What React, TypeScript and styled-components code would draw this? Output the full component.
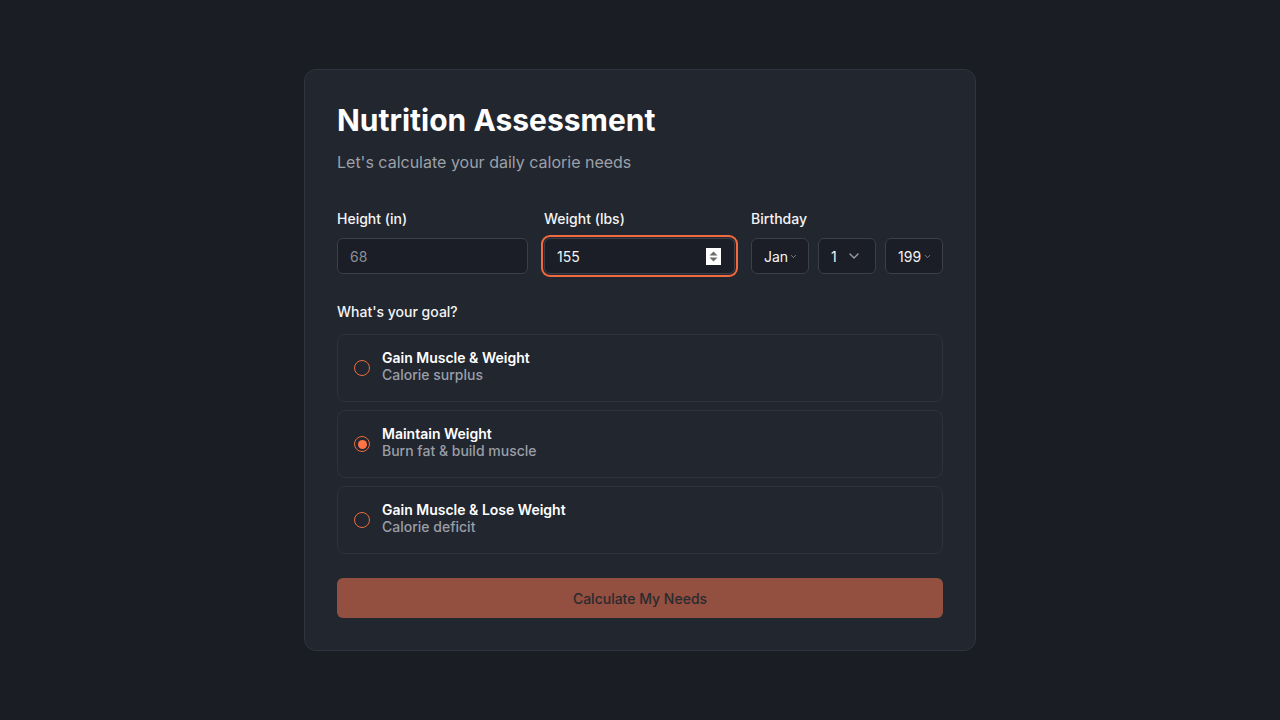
import React from "react";
import styled, { createGlobalStyle, css } from "styled-components";

const Global = createGlobalStyle`
  html, body { margin: 0; padding: 0; background: #1b1d24; }
  body { font-family: Inter, "Noto Sans", sans-serif; color: #f4f4f5; }
  * { box-sizing: border-box; }
`;

const Page = styled.div`
  min-height: 720px;
  display: flex;
  justify-content: center;
  align-items: flex-start;
  padding-top: 69px;
`;

const Card = styled.div`
  width: 672px;
  background: #22262f;
  border: 1px solid #30343e;
  border-radius: 12px;
  padding: 32px 32px 32px;
`;

const Title = styled.h1`
  margin: 0;
  font-size: 30px;
  line-height: 36px;
  font-weight: 700;
  color: #ffffff;
`;

const Subtitle = styled.p`
  margin: 12px 0 0;
  font-size: 16px;
  line-height: 24px;
  color: #9ca0a8;
`;

const FieldsRow = styled.div`
  margin-top: 35px;
  display: grid;
  grid-template-columns: repeat(3, 1fr);
  gap: 16px;
`;

const Field = styled.div`
  display: flex;
  flex-direction: column;
  gap: 9px;
`;

const Label = styled.div`
  font-size: 14px;
  line-height: 20px;
  font-weight: 500;
  color: #f4f4f5;
`;

const InputBox = styled.div<{ $focused?: boolean }>`
  height: 36px;
  border: 1px solid #3a3f4a;
  background: #1b1e26;
  border-radius: 6px;
  display: flex;
  align-items: center;
  padding: 0 12px;
  font-size: 14px;
  ${(p) =>
    p.$focused &&
    css`
      box-shadow: 0 0 0 1px #22262f, 0 0 0 3px #f26b3f;
    `}
`;

const InputText = styled.span<{ $muted?: boolean }>`
  flex: 1;
  color: ${(p) => (p.$muted ? "#8a8e96" : "#f4f4f5")};
`;

const Spinner = styled.div`
  width: 15px;
  height: 17px;
  background: #ffffff;
  display: flex;
  align-items: center;
  justify-content: center;
  margin-right: 1px;
`;

const SelectRow = styled.div`
  display: flex;
  gap: 9px;
`;

const SelectBox = styled.div`
  width: 58px;
  height: 36px;
  border: 1px solid #3a3f4a;
  background: #1b1e26;
  border-radius: 6px;
  display: flex;
  align-items: center;
  padding: 0 0 0 12px;
  font-size: 14px;
  color: #f4f4f5;
  overflow: hidden;
  white-space: nowrap;
`;

const SelectValue = styled.span<{ $wide?: boolean }>`
  width: ${(p) => (p.$wide ? "auto" : "25px")};
  flex: ${(p) => (p.$wide ? "1" : "none")};
`;

const ChevronWrap = styled.span<{ $gap?: number }>`
  display: flex;
  margin-right: ${(p) => p.$gap ?? 0}px;
`;

const GoalLabel = styled(Label)`
  margin-top: 28px;
`;

const Options = styled.div`
  margin-top: 12px;
  display: flex;
  flex-direction: column;
  gap: 8px;
`;

const Option = styled.div`
  height: 68px;
  border: 1px solid #2e323c;
  border-radius: 8px;
  display: flex;
  align-items: center;
  padding: 0 16px;
  gap: 12px;
`;

const Radio = styled.div<{ $checked?: boolean }>`
  width: 16px;
  height: 16px;
  border-radius: 50%;
  border: 1.5px solid #ef6a3e;
  display: flex;
  align-items: center;
  justify-content: center;
  &::after {
    content: "";
    width: 9px;
    height: 9px;
    border-radius: 50%;
    background: #ff7347;
    display: ${(p) => (p.$checked ? "block" : "none")};
  }
`;

const OptionText = styled.div`
  display: flex;
  flex-direction: column;
  margin-bottom: 4px;
`;

const OptionTitle = styled.div`
  font-size: 14px;
  line-height: 17px;
  font-weight: 600;
  color: #ffffff;
`;

const OptionSub = styled.div`
  font-size: 14px;
  line-height: 17px;
  font-weight: 500;
  color: #9a9ea6;
`;

const Button = styled.button`
  margin-top: 24px;
  width: 100%;
  height: 40px;
  border: none;
  border-radius: 6px;
  background: #934f3f;
  color: #2a2a2f;
  font-family: Inter, sans-serif;
  font-size: 14px;
  font-weight: 500;
  display: flex;
  align-items: center;
  justify-content: center;
`;

const Chevron = ({ size }: { size: number }) => (
  <svg width={size} height={size} viewBox="0 0 24 24" fill="none" stroke="#9aa0a8" strokeWidth={2} strokeLinecap="round" strokeLinejoin="round">
    <path d="m6 9 6 6 6-6" />
  </svg>
);

const SpinIcon = () => (
  <svg width="11" height="13" viewBox="0 0 11 13">
    <path d="M5.5 1.5 L9.5 5.5 H1.5 Z" fill="#6b6b6b" />
    <path d="M5.5 11.5 L9.5 7.5 H1.5 Z" fill="#6b6b6b" />
  </svg>
);

const goals = [
  { title: "Gain Muscle & Weight", sub: "Calorie surplus", checked: false },
  { title: "Maintain Weight", sub: "Burn fat & build muscle", checked: true },
  { title: "Gain Muscle & Lose Weight", sub: "Calorie deficit", checked: false },
];

export default function App() {
  return (
    <>
      <Global />
      <Page>
        <Card>
          <Title>Nutrition Assessment</Title>
          <Subtitle>Let's calculate your daily calorie needs</Subtitle>
          <FieldsRow>
            <Field>
              <Label>Height (in)</Label>
              <InputBox>
                <InputText $muted>68</InputText>
              </InputBox>
            </Field>
            <Field>
              <Label>Weight (lbs)</Label>
              <InputBox $focused>
                <InputText>155</InputText>
                <Spinner>
                  <SpinIcon />
                </Spinner>
              </InputBox>
            </Field>
            <Field>
              <Label>Birthday</Label>
              <SelectRow>
                <SelectBox>
                  <SelectValue>Jan</SelectValue>
                  <Chevron size={9} />
                </SelectBox>
                <SelectBox>
                  <SelectValue $wide>1</SelectValue>
                  <ChevronWrap $gap={13}>
                    <Chevron size={16} />
                  </ChevronWrap>
                </SelectBox>
                <SelectBox>
                  <SelectValue>199</SelectValue>
                  <Chevron size={9} />
                </SelectBox>
              </SelectRow>
            </Field>
          </FieldsRow>
          <GoalLabel>What's your goal?</GoalLabel>
          <Options>
            {goals.map((g) => (
              <Option key={g.title}>
                <Radio $checked={g.checked} />
                <OptionText>
                  <OptionTitle>{g.title}</OptionTitle>
                  <OptionSub>{g.sub}</OptionSub>
                </OptionText>
              </Option>
            ))}
          </Options>
          <Button>Calculate My Needs</Button>
        </Card>
      </Page>
    </>
  );
}
